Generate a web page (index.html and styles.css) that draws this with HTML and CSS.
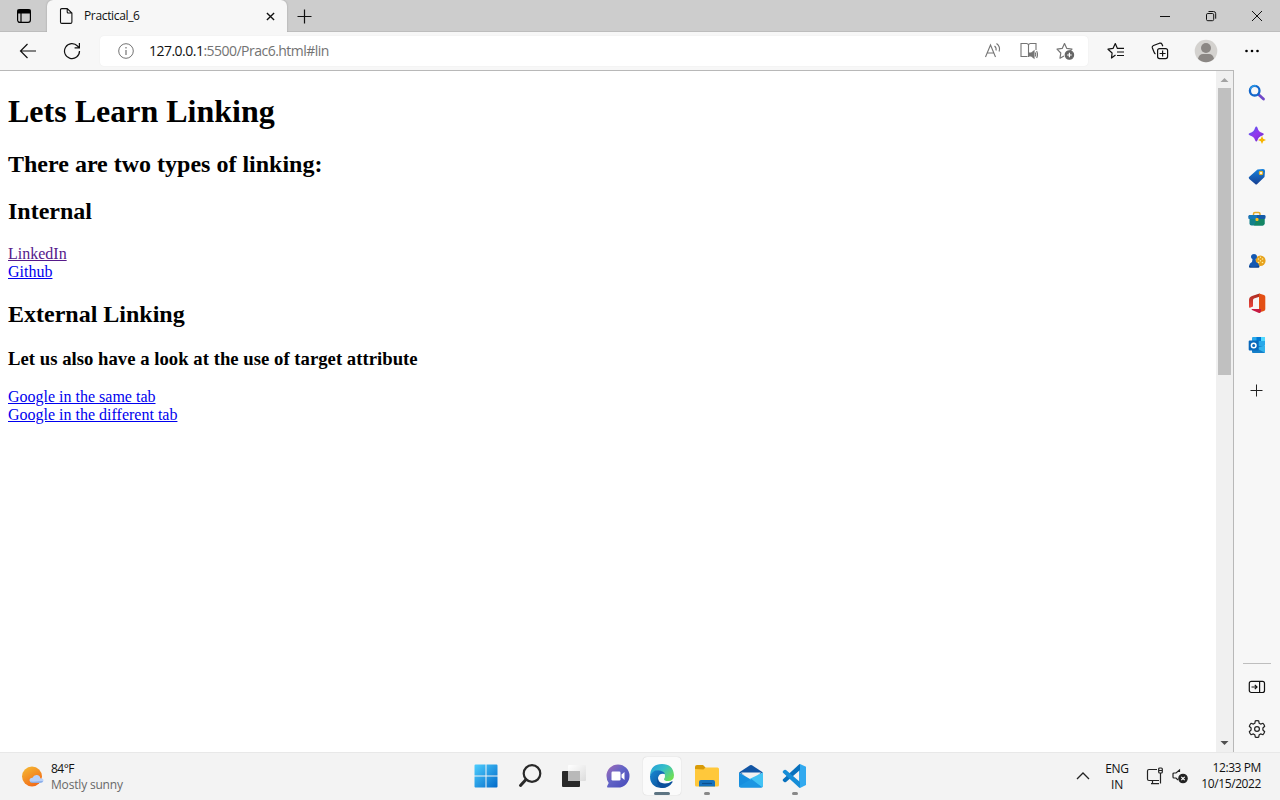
FILE: index.html
```html
<!DOCTYPE html>
<html lang="en">
<head>
<meta charset="utf-8">
<title>Practical_6</title>
<link rel="stylesheet" href="styles.css">
</head>
<body>
<div class="desktop">
  <header class="tabbar">
    <div class="tab-actions"><svg width="16" height="16" viewBox="0 0 16 16" fill="none" stroke="#000" stroke-width="1.2"><rect x="1.6" y="1.6" width="12.8" height="12.8" rx="2.3"/><path d="M5 4v10.4"/><path d="M2 2h12v3H2z" fill="#000"/></svg></div>
    <div class="tab">
      <svg width="14" height="16" viewBox="0 0 14 16" fill="none" stroke="#111" stroke-width="1.1"><path d="M2.8.6h5.4L12.9 5v9q0 1.4-1.4 1.4H2.8Q1.5 15.4 1.500 14V2Q1.500.6 2.800.6zM8.200.7V4q0 1 1 1h3.600"/></svg>
      <span class="tab-title">Practical_6</span>
      <svg class="tab-close" width="9" height="9" viewBox="0 0 10 10" stroke="#111" stroke-width="1.5"><path d="M1 1l8 8M9 1L1 9"/></svg>
    </div>
    <div class="new-tab"><svg width="15" height="15" viewBox="0 0 15 15" stroke="#111" stroke-width="1.2"><path d="M7.500.5v14M.5 7.500h14"/></svg></div>
    <div class="window-controls">
      <span><svg width="12" height="12" viewBox="0 0 12 12" stroke="#111"><path d="M1 6.500h10"/></svg></span>
      <span><svg width="12" height="12" viewBox="0 0 12 12" fill="none" stroke="#111"><rect x="1.500" y="3.500" width="7.200" height="7.200" rx="1.300"/><path d="M3.500 1.500h5q2.200 0 2.200 2.200v5"/></svg></span>
      <span><svg width="12" height="12" viewBox="0 0 12 12" stroke="#111"><path d="M1 1l10 10M11 1L1 11"/></svg></span>
    </div>
  </header>

  <nav class="toolbar">
    <div class="nav-button back"><svg width="18" height="16" viewBox="0 0 18 16" fill="none" stroke="#111" stroke-width="1.200"><path d="M17 8H1.500M8.500 1L1.500 8l7 7"/></svg></div>
    <div class="nav-button"><svg width="18" height="18" viewBox="0 0 18 18" fill="none" stroke="#111" stroke-width="1.200"><path d="M16.500 9A7.500 7.500 0 1 1 14.500 4l1.700 1.700M16.400 1v4.800h-4.800"/></svg></div>
    <div class="address">
      <svg class="info" width="16" height="16" viewBox="0 0 16 16" fill="none" stroke="#737373"><circle cx="8" cy="8" r="7.300"/><path d="M8 7v5M8 4v1.500" stroke-width="1.200"/></svg>
      <span class="url"><b>127.0.0.1</b>:5500/Prac6.html#lin</span>
      <span class="address-icons">
        <svg width="18" height="18" viewBox="0 0 18 18" fill="none" stroke="#757575" stroke-width="1.100"><path d="M1.500 15L6.500 3l5 12M3.300 11h6.500M10.500 4q2.200 1.700 1.500 4.500M12.500 1.500q4.200 3.200 2.600 8"/></svg>
        <svg width="18" height="18" viewBox="0 0 18 18" fill="none" stroke="#757575" stroke-width="1.100"><path d="M8.500 3Q8 1.500 6.500 1.500H1v13h6.500M8.500 15V3Q9 1.500 10.500 1.500H16V8"/><path d="M9.500 11h2l2.500-2v7l-2.500-2h-2z" fill="#757575"/><path d="M15.200 10.500q1 2 0 4M16.600 9q1.800 3.500 0 7"/></svg>
        <svg width="19" height="18" viewBox="0 0 19 18" fill="none" stroke="#757575" stroke-width="1.200" stroke-linejoin="round"><path d="M8 14L4 16.200l.8-5.200L1 7.200l5.200-.8L8.500 1.500l2.300 4.900 5.200.8-2 2"/><circle cx="13.400" cy="13" r="4.200" fill="#666" stroke="#666"/><path d="M13.400 10.700v4.600M11.100 13h4.600" stroke="#fff"/></svg>
      </span>
    </div>
    <div class="tools">
      <svg width="18" height="18" viewBox="0 0 18 18" fill="none" stroke="#111" stroke-width="1.200" stroke-linejoin="round"><path d="M8.500 13L4.500 16l.6-5L1 7.200l5-.8 2.300-4.900 2.100 4.900H17M10 10h7M10 13.500h7"/></svg>
      <svg width="18" height="18" viewBox="0 0 18 18" fill="none" stroke="#111" stroke-width="1.200"><rect x="6.600" y="6.600" width="10" height="10" rx="2"/><path d="M11.600 8.500v6M8.600 11.500h6M4.500 12Q3.500 11.500 3 10L1.400 6Q.8 4.300 2.500 3.500l6-2.300q1.800-.5 2.500 1l.8 2"/></svg>
      <svg class="avatar" width="24" height="24" viewBox="0 0 24 24"><circle cx="12" cy="12" r="11.300" fill="#d4d2cf"/><circle cx="12" cy="9" r="5" fill="#8b8784"/><path d="M4 19.800Q5 15 9 15h6q4 0 5 4.800a11.200 11.200 0 0 1-16 0z" fill="#8b8784"/></svg>
      <svg width="14" height="4" viewBox="0 0 14 4"><circle cx="1.500" cy="2" r="1.300"/><circle cx="7" cy="2" r="1.300"/><circle cx="12.500" cy="2" r="1.300"/></svg>
    </div>
  </nav>

  <div class="workspace">
    <div class="viewport">
      <main class="document">
        <h1>Lets Learn Linking</h1>
        <h2>There are two types of linking:</h2>
        <h2>Internal</h2>
        <a class="visited" href="#lin">LinkedIn</a><br>
        <a href="#git">Github</a>
        <h2>External Linking</h2>
        <h3>Let us also have a look at the use of target attribute</h3>
        <a href="#same">Google in the same tab</a><br>
        <a href="#different">Google in the different tab</a>
      </main>
      <div class="scrollbar">
        <svg width="17" height="17" viewBox="0 0 17 17"><path d="M4.500 11L8.500 7l4 4z" fill="#a3a3a3"/></svg>
        <div class="thumb"></div>
        <svg class="down" width="17" height="17" viewBox="0 0 17 17"><path d="M4.500 6h8l-4 4z" fill="#505050"/></svg>
      </div>
    </div>
    <aside class="rail">
      <span><svg width="18" height="18" viewBox="0 0 18 18" fill="none"><path d="M10.500 10.500l5 4.500" stroke="#7048c8" stroke-width="2.800" stroke-linecap="round"/><circle cx="6.700" cy="6.700" r="4.800" stroke="#1266cb" stroke-width="2.300"/><path d="M2.300 5.500A4.800 4.800 0 0 1 8 2" stroke="#2b9ce8" stroke-width="1.500"/></svg></span>
      <span><svg width="18" height="18" viewBox="0 0 18 18"><defs><linearGradient id="spark" x2="1" y2="1"><stop stop-color="#3b66ef"/><stop offset=".5" stop-color="#9537ed"/><stop offset="1" stop-color="#6431c5"/></linearGradient></defs><path d="M7 2Q8.300-.8 9.600 2q.8 4 4.800 5 2.800 1.200 0 2.400-4 1-4.800 4.600-1.300 3-2.600 0Q6.200 10.400 2 9.400-.8 8.200 2 7 6 6 7 2z" fill="url(#spark)"/><path d="M14 10l1.200 2.800L18 14l-2.800 1.200L14 18l-1.200-2.800L10 14l2.800-1.200z" fill="#f7b500"/></svg></span>
      <span><svg width="18" height="18" viewBox="0 0 18 18"><defs><linearGradient id="tag" x2="0" y2="1"><stop stop-color="#1480dc"/><stop offset="1" stop-color="#173f92"/></linearGradient></defs><path d="M9.500 1.500L15 1q2 0 2 2l-.5 6-7.300 7q-1 1-2 0L1.300 11q-1.300-1.200 0-2.300z" fill="url(#tag)"/><circle cx="13" cy="5" r="1.700" fill="#fff" stroke="#e8b327" stroke-width="1.200"/></svg></span>
      <span><svg width="18" height="18" viewBox="0 0 18 18"><path d="M5.500 5.500V4q0-1.500 1.500-1.500h3.500Q12 2.500 12 4v1.500" fill="none" stroke="#e5aa28" stroke-width="1.500"/><path d="M1.500 8h15v5.500q0 2-2 2h-11q-2 0-2-2z" fill="#13808a"/><path d="M9 9h7.500v4.500q0 2-2 2H6z" fill="#148663"/><rect x=".5" y="5" width="17" height="4" rx="1.300" fill="#155ba8"/><path d="M2 5h7v4H.7V6z" fill="#1678b7"/><rect x="7.500" y="8" width="3" height="3" rx="1" fill="#ffc322"/></svg></span>
      <span><svg width="18" height="18" viewBox="0 0 18 18"><circle cx="12.400" cy="8.700" r="5.200" fill="#e7a21d"/><path d="M1 14q.5-3 3-4L4.500 7Q3 6.500 3 5q0-3 3-3t3 3q0 1.500-1.500 2L8 10q3 1 3.300 4 .2 1.500-1 1.500H2Q.8 15.500 1 14z" fill="#1458b1"/><path d="M1 14q4 1.800 10.300 0 .2 1.500-1 1.500H2Q.8 15.500 1 14z" fill="#0b397c"/><g fill="#fff0a0"><circle cx="10.500" cy="7" r=".8"/><circle cx="14.500" cy="7" r=".8"/><circle cx="10.500" cy="10.500" r=".8"/><circle cx="14.500" cy="10.500" r=".8"/><circle cx="12.500" cy="5.300" r=".7"/><circle cx="12.500" cy="8.700" r=".7"/></g></svg></span>
      <span><svg width="18" height="20" viewBox="0 0 18 20"><defs><linearGradient id="office" x2="0" y2="1"><stop stop-color="#a92b21"/><stop offset="1" stop-color="#ee473d"/></linearGradient></defs><path d="M11.500.5L4 3Q1 4 1 7v7q0 1 1 .7l3-1.300V7q0-1 1-1.500l5.500-1.700z" fill="url(#office)"/><path d="M11 .5L16 2q1.300.5 1.300 2v12q0 1.500-1.300 2l-5 1.600z" fill="#e35015"/><path d="M11 16H4.200q-1.200.2-.2 1l7 3q2 .2 2-2v-2z" fill="#c71b42"/></svg></span>
      <span><svg width="18" height="18" viewBox="0 0 18 18"><rect x="4" y="1" width="13" height="9" rx="1" fill="#28a8ea"/><path d="M8.500 1H13v4H8.500z" fill="#0078d4"/><path d="M13 1h4v4h-4z" fill="#50d9ff"/><path d="M4 10h13v6q0 1-1 1H5q-1 0-1-1z" fill="#147fc8"/><path d="M17 9.500v7.300L8 12z" fill="#32b3ed"/><rect x=".7" y="4.500" width="10" height="10" rx="1" fill="#0868bb"/><circle cx="5.700" cy="9.500" r="2.300" fill="none" stroke="#fff" stroke-width="1.500"/></svg></span>
      <span class="add"><svg width="13" height="13" viewBox="0 0 13 13" stroke="#222"><path d="M6.500.5v12M.5 6.500h12"/></svg></span>
      <div class="rail-bottom">
        <span><svg width="18" height="14" viewBox="0 0 18 14" fill="none" stroke="#111" stroke-width="1.200"><rect x="1.300" y="1.300" width="15.200" height="11.200" rx="2"/><path d="M11.600 1.500v11M3.500 7H9M6.800 4.800L9 7 6.800 9.200"/></svg></span>
        <span><svg width="18" height="18" viewBox="0 0 18 18" fill="none" stroke="#222" stroke-width="1.200" stroke-linejoin="round"><circle cx="9" cy="9" r="2.400"/><path d="M7.300.9Q9 .5 10.700.9l.5 2.400 1.400.8 2.400-.8q1.300 1.300 1.700 3L14.900 8v2l1.800 1.700q-.5 1.700-1.700 3l-2.400-.8-1.400.8-.5 2.400q-1.700.4-3.400 0l-.5-2.400-1.400-.8-2.400.8q-1.300-1.300-1.700-3L3.100 10V8L1.300 6.300q.5-1.700 1.700-3l2.400.8 1.400-.8z"/></svg></span>
      </div>
    </aside>
  </div>

  <footer class="taskbar">
    <div class="weather">
      <svg width="24" height="22" viewBox="0 0 24 22"><defs><linearGradient id="sun" x2=".6" y2="1"><stop stop-color="#f5bd35"/><stop offset="1" stop-color="#f26b17"/></linearGradient></defs><circle cx="11" cy="10.500" r="10" fill="url(#sun)"/><path d="M11 16.500q-2.500 0-2.500-2.300t3-2.500q1.300-3 4.300-2.700 3 .2 3.500 3.200 3.200 0 3.200 2.300t-2.500 2.300z" fill="#b8d1fa"/><path d="M9 15.500q4 .5 13-.5-.5 1.800-2.500 1.800H11q-1.500 0-2-1.300z" fill="#84a8e5"/></svg>
      <div><div class="temp">84°F</div><div class="forecast">Mostly sunny</div></div>
    </div>
    <div class="apps">
      <span><svg width="24" height="24" viewBox="0 0 24 24"><defs><linearGradient id="win" gradientUnits="userSpaceOnUse" x1="0" y1="0" x2="24" y2="24"><stop stop-color="#4fd0ff"/><stop offset="1" stop-color="#0067c8"/></linearGradient></defs><path d="M1.500.5H11.500v11H.5v-10q0-1 1-1zM12.500 .5h10q1 0 1 1v10h-11zM.5 12.500h11v11h-10q-1 0-1-1zM12.500 12.500h11v10q0 1-1 1h-10z" fill="url(#win)"/></svg></span>
      <span><svg width="24" height="24" viewBox="0 0 24 24" fill="none" stroke="#292929"><circle cx="14" cy="9.500" r="8.300" stroke-width="2.200"/><path d="M8 15.500l-5.500 6" stroke-width="3" stroke-linecap="round"/></svg></span>
      <span><svg width="26" height="24" viewBox="0 0 26 24"><defs><linearGradient id="front" x2="1" y2="1"><stop stop-color="#fff"/><stop offset="1" stop-color="#dcdcdc"/></linearGradient></defs><rect x="1" y="7" width="18" height="16" rx="1" fill="#292929"/><rect x="7" y="1" width="18" height="16" rx="1" fill="url(#front)"/><path d="M7 7h12v10H7z" fill="#b9b9b9"/></svg></span>
      <span><svg width="24" height="24" viewBox="0 0 24 24"><defs><linearGradient id="chat" x2="1" y2="1"><stop stop-color="#a66bb6"/><stop offset=".45" stop-color="#6264c6"/><stop offset="1" stop-color="#4549b9"/></linearGradient></defs><path d="M12 .5A11.500 11.500 0 0 1 12 23.500H2q-1.500 0-.8-1.500l1.500-3Q.5 16 .5 12A11.500 11.500 0 0 1 12 .5z" fill="url(#chat)"/><rect x="5.500" y="7.500" width="9" height="9" rx="1.200" fill="#fff"/><path d="M15.500 10.500l3-2.500v8l-3-2.500z" fill="#fff"/></svg></span>
      <span class="active"><svg width="26" height="26" viewBox="0 0 26 26"><defs><linearGradient id="edgeTop" x2="1" y2=".7"><stop stop-color="#249bda"/><stop offset=".5" stop-color="#35bfc9"/><stop offset="1" stop-color="#6fdf54"/></linearGradient><linearGradient id="edgeLow" x2="1" y2="1"><stop stop-color="#178ad5"/><stop offset="1" stop-color="#0b4790"/></linearGradient></defs><path d="M1 12Q2 1 13 1t12 11q0 6-6 6-4 0-4-2 1-1 1-3 0-4-5-5Q4 7 1 13z" fill="url(#edgeTop)"/><path d="M1 13Q3 7 9.500 7.300 14.500 8 16 11 10 9.500 9 15q0 7 8 9-3 1-5 1Q1 24 1 13z" fill="url(#edgeLow)"/><path d="M9 14q-1 5 5 6.300 5 .7 9-2.100 1 0 .5 1Q20 25 13 25 6 22 9 14z" fill="#0b509c"/></svg><i></i></span>
      <span><svg width="26" height="24" viewBox="0 0 26 24"><rect x="1" y="3.500" width="24" height="19" rx="1.500" fill="#ffc83b"/><path d="M1 5V3q0-2 2-2h6l2.500 2.500L9.500 5.500z" fill="#d89b08"/><path d="M5 22.500V18q0-2 2-2h12q2 0 2 2v4.500z" fill="#1572bd"/><path d="M8 19.500h10" stroke="#0b4f8d" stroke-width="1.200"/></svg><i></i></span>
      <span><svg width="26" height="24" viewBox="0 0 26 24"><path d="M1 8.500L12 1.200q1-.6 2 0l11 7.300-12 6z" fill="#1255a4"/><path d="M3 8.500h20L15 16h-4z" fill="#f2f2f2"/><path d="M1 8.500L17 18l8 4.500q-.5 1-2 1H3q-2 0-2-2z" fill="#168ede"/><path d="M25 8.500v13q0 1.500-1 1.800L11.500 15z" fill="#42c3f5"/><path d="M1 22L13.500 15l10.500 8.300-1 .2H3q-1.500 0-2-1.500z" fill="#1c96e2"/></svg></span>
      <span><svg width="26" height="26" viewBox="0 0 26 26"><path d="M18 1l6 2.800V22l-6 3-1-2V3z" fill="#32a9ef"/><path d="M18 1v6L4 19q-1 .7-1.800 0L1 18q-.7-1 0-1.800L17 1.500z" fill="#0871bd"/><path d="M18 25v-6L4 7Q3 6.300 2.200 7L1 8q-.7 1 0 1.800L17 24.500z" fill="#168dd7"/></svg><i></i></span>
    </div>
    <div class="tray">
      <svg class="chevron" width="14" height="8" viewBox="0 0 14 8" fill="none" stroke="#222" stroke-width="1.300"><path d="M1 7l6-6 6 6"/></svg>
      <div class="language">ENG<br>IN</div>
      <svg class="network" width="18" height="18" viewBox="0 0 18 18" fill="none" stroke="#222" stroke-width="1.200"><path d="M11 2.500H3Q1.500 2.500 1.500 4v8q0 1.500 1.500 1.500h10M6.500 13.500v3M5 16.600h8"/><rect x="12.700" y="1" width="3.600" height="5" rx="1"/><path d="M13 3.500h3M14.500 6v10.500"/></svg>
      <svg class="sound" width="16" height="16" viewBox="0 0 16 16" fill="none" stroke="#222" stroke-width="1.200"><path d="M7.500 4V2L4 5H2Q1 5 1 6v3q0 1 1 1h2l2 2"/><circle cx="11" cy="10.500" r="4.200" fill="#222"/><path d="M9.300 8.800l3.400 3.400M12.700 8.800l-3.400 3.400" stroke="#fff" stroke-width="1.100"/></svg>
      <div class="clock">12:33 PM<br>10/15/2022</div>
    </div>
  </footer>
</div>
</body>
</html>
```
FILE: styles.css
```css
* { box-sizing: border-box; }
html, body { margin: 0; }
body { width: 1280px; height: 800px; overflow: hidden; font-family: "Open Sans", "Noto Sans", sans-serif; color: #111; }
svg { display: block; flex: none; }
.desktop { display: flex; flex-direction: column; height: 800px; background: #f7f7f7; }

.tabbar { display: flex; height: 32px; flex: none; background: #cdcdcd; box-shadow: inset 0 -1px #bdbdbd; }
.tab-actions { width: 47px; display: grid; place-items: center; border-radius: 0 0 5px 0; }
.tab { display: flex; align-items: center; width: 240px; padding: 0 12px; background: #f7f7f7; border-radius: 6px 6px 0 0; box-shadow: 0 0 2px #999; clip-path: inset(0 -3px 0 -3px); }
.tab-title { margin-left: 11px; font-size: 12px; letter-spacing: -.35px; line-height: 18px; }
.tab-close { margin-left: auto; }
.new-tab { width: 35px; display: grid; place-items: center; }
.window-controls { display: flex; margin-left: auto; }
.window-controls span { width: 46px; display: grid; place-items: center; }

.toolbar { display: flex; align-items: center; height: 38px; flex: none; background: #f7f7f7; }
.nav-button { width: 44px; display: grid; place-items: center; }
.nav-button.back { margin-left: 6px; }
.address { display: flex; align-items: center; width: 988px; height: 30px; margin-left: 6px; padding: 0 13px 0 18px; border-radius: 4px; background: #fff; box-shadow: 0 0 1px #e1e1e1; }
.url { margin-left: 15px; margin-top: -1px; font-size: 14px; letter-spacing: -.52px; color: #737373; }
.url b { font-weight: 400; color: #111; }
.address-icons { display: flex; gap: 18px; margin-left: auto; }
.tools { display: flex; align-items: center; justify-content: space-between; width: 152px; margin-left: 19px; }
.avatar { margin: 0 1px 0 -1px; }

.workspace { display: flex; height: 682px; flex: none; }
.viewport { display: flex; width: 1234px; border-top: 1px solid #b8b8b8; border-right: 1px solid #b8b8b8; background: #fff; }
.document { width: 1216px; padding: 0 8px; font-family: "Liberation Serif", "Times New Roman", serif; font-size: 16px; line-height: normal; color: #000; display: flow-root; }
.document h1 { margin: 22px 0 20.9px; }
.document h3 { letter-spacing: .015px; }
.document a { color: #00e; }
.document .visited { color: #551a8b; }
.scrollbar { display: flex; flex-direction: column; width: 17px; background: #f0f0f0; }
.thumb { width: 13px; height: 287px; margin: 0 auto; background: #c0c0c0; }
.scrollbar .down { margin-top: auto; }
.rail { display: flex; flex-direction: column; width: 46px; padding-top: 2px; }
.rail span { display: grid; place-items: center; height: 42px; }
.rail .add { height: 48px; padding-right: 1px; }
.rail-bottom { margin: auto 9px 2px; padding-top: 2px; border-top: 1px solid #bebebe; }

.taskbar { display: flex; justify-content: space-between; height: 48px; background: #f3f3f3; border-top: 1px solid #e8e8e8; font-size: 12px; line-height: 16px; }
.weather { display: flex; align-items: center; width: 464px; padding-left: 21px; gap: 6px; }
.temp { letter-spacing: -.5px; }
.forecast { color: #686868; letter-spacing: -.18px; }
.apps { display: flex; align-items: center; width: 353px; padding-bottom: 1px; }
.apps span { position: relative; display: grid; place-items: center; flex: none; width: 38px; height: 38px; margin: 0 3.05px; border-radius: 4px; }
.apps .active { background: #fbfbfb; box-shadow: 0 0 1px #bbb; }
.apps i { position: absolute; bottom: 0; left: 16px; width: 6px; height: 3px; border-radius: 2px; background: #888; }
.apps .active i { left: 11px; width: 16px; background: #5d7482; }
.tray { display: flex; align-items: center; width: 463px; justify-content: flex-end; padding-right: 19px; padding-bottom: 1px; letter-spacing: -.25px; }
.language { width: 30px; margin-left: 12px; padding-top: 1px; text-align: center; }
.network { margin-left: 14px; }
.sound { margin-left: 8px; }
.clock { width: 61px; margin-left: 12px; text-align: right; white-space: nowrap; letter-spacing: -.4px; }
```
